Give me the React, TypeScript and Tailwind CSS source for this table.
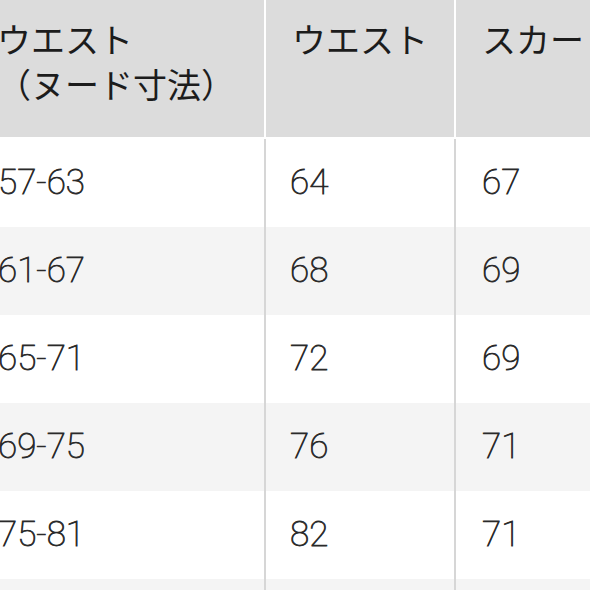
const rows = [
  ["57-63", "64", "67"],
  ["61-67", "68", "69"],
  ["65-71", "72", "69"],
  ["69-75", "76", "71"],
  ["75-81", "82", "71"],
  ["81-87", "88", "73"],
];

const num =
  "flex items-center text-[35px] font-thin text-[#2a2a2a] [-webkit-text-stroke:0.8px_#2a2a2a] font-['Roboto',sans-serif]";

const App = () => {
  return (
    <div className="w-[590px] h-[590px] overflow-hidden bg-white">
      <div className="-ml-[28px] w-[760px]">
        <div className="grid grid-cols-[294px_190px_276px] h-[139px] border-b-2 border-white">
          <div className="bg-[#dcdcdc] border-r-2 border-white pl-[25px] pt-[16px] text-[34px] leading-[45px] text-[#1c1c1c] font-['Noto_Sans_CJK_JP',sans-serif]">
            <div>ウエスト</div>
            <div>（ヌード寸法）</div>
          </div>
          <div className="bg-[#dcdcdc] border-r-2 border-white pl-[26px] pt-[16px] text-[34px] leading-[45px] text-[#1c1c1c] font-['Noto_Sans_CJK_JP',sans-serif]">
            ウエスト
          </div>
          <div className="bg-[#dcdcdc] pl-[26px] pt-[16px] text-[34px] leading-[45px] text-[#1c1c1c] whitespace-nowrap font-['Noto_Sans_CJK_JP',sans-serif]">
            スカート丈
          </div>
        </div>
        {rows.map((r, i) => (
          <div
            key={i}
            className={`grid grid-cols-[294px_190px_276px] h-[88px] ${i % 2 === 1 ? "bg-[#f4f4f4]" : "bg-white"}`}
          >
            <div className={`border-r-2 border-[#d6d6d6] pl-[26px] ${num}`}>{r[0]}</div>
            <div className={`border-r-2 border-[#d6d6d6] pl-[24px] ${num}`}>{r[1]}</div>
            <div className={`pl-[26px] ${num}`}>{r[2]}</div>
          </div>
        ))}
      </div>
    </div>
  );
};

export default App;
